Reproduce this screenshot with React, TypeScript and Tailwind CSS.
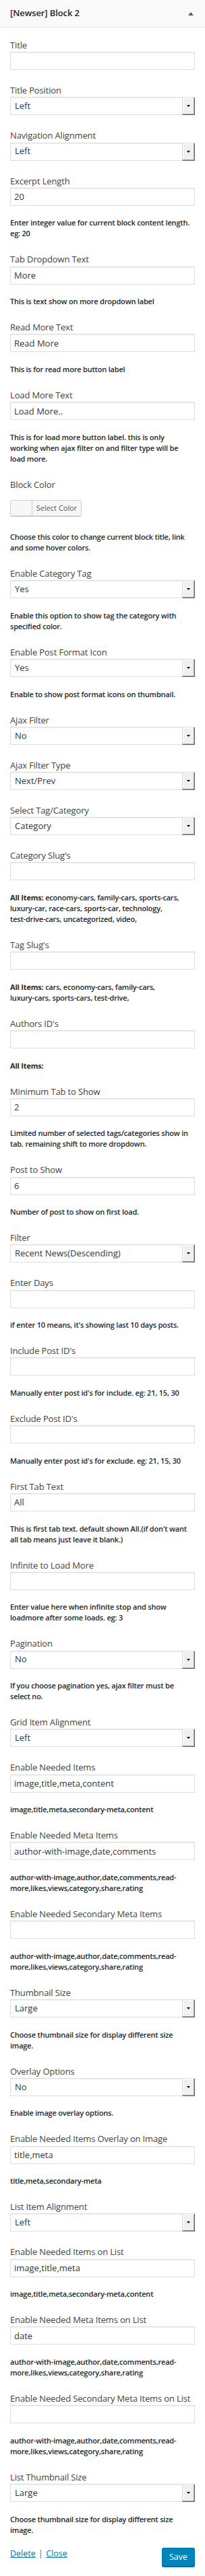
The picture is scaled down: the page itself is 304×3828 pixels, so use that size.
import React from "react";

type Field =
  | { kind: "input"; label: string; value?: string; desc?: string[] }
  | { kind: "select"; label: string; value: string; desc?: string[] }
  | { kind: "color"; label: string; desc: string[] };

const META = ["author-with-image,author,date,comments,read-", "more,likes,views,category,share,rating"];
const THUMB = ["Choose thumbnail size for display different size", "image."];

const FIELDS: Field[] = [
  { kind: "input", label: "Title" },
  { kind: "select", label: "Title Position", value: "Left" },
  { kind: "select", label: "Navigation Alignment", value: "Left" },
  { kind: "input", label: "Excerpt Length", value: "20", desc: ["Enter integer value for current block content length.", "eg: 20"] },
  { kind: "input", label: "Tab Dropdown Text", value: "More", desc: ["This is text show on more dropdown label"] },
  { kind: "input", label: "Read More Text", value: "Read More", desc: ["This is for read more button label"] },
  {
    kind: "input",
    label: "Load More Text",
    value: "Load More..",
    desc: ["This is for load more button label. this is only", "working when ajax filter on and filter type will be", "load more."],
  },
  { kind: "color", label: "Block Color", desc: ["Choose this color to change current block title, link", "and some hover colors."] },
  { kind: "select", label: "Enable Category Tag", value: "Yes", desc: ["Enable this option to show tag the category with", "specified color."] },
  { kind: "select", label: "Enable Post Format Icon", value: "Yes", desc: ["Enable to show post format icons on thumbnail."] },
  { kind: "select", label: "Ajax Filter", value: "No" },
  { kind: "select", label: "Ajax Filter Type", value: "Next/Prev" },
  { kind: "select", label: "Select Tag/Category", value: "Category" },
  {
    kind: "input",
    label: "Category Slug's",
    desc: ["All Items: economy-cars, family-cars, sports-cars,", "luxury-car, race-cars, sports-car, technology,", "test-drive-cars, uncategorized, video,"],
  },
  { kind: "input", label: "Tag Slug's", desc: ["All Items: cars, economy-cars, family-cars,", "luxury-cars, sports-cars, test-drive,"] },
  { kind: "input", label: "Authors ID's", desc: ["All Items:"] },
  { kind: "input", label: "Minimum Tab to Show", value: "2", desc: ["Limited number of selected tags/categories show in", "tab. remaining shift to more dropdown."] },
  { kind: "input", label: "Post to Show", value: "6", desc: ["Number of post to show on first load."] },
  { kind: "select", label: "Filter", value: "Recent News(Descending)" },
  { kind: "input", label: "Enter Days", desc: ["if enter 10 means, it's showing last 10 days posts."] },
  { kind: "input", label: "Include Post ID's", desc: ["Manually enter post id's for include. eg: 21, 15, 30"] },
  { kind: "input", label: "Exclude Post ID's", desc: ["Manually enter post id's for exclude. eg: 21, 15, 30"] },
  { kind: "input", label: "First Tab Text", value: "All", desc: ["This is first tab text. default shown All.(if don't want", "all tab means just leave it blank.)"] },
  { kind: "input", label: "Infinite to Load More", desc: ["Enter value here when infinite stop and show", "loadmore after some loads. eg: 3"] },
  { kind: "select", label: "Pagination", value: "No", desc: ["If you choose pagination yes, ajax filter must be", "select no."] },
  { kind: "select", label: "Grid Item Alignment", value: "Left" },
  { kind: "input", label: "Enable Needed Items", value: "image,title,meta,content", desc: ["image,title,meta,secondary-meta,content"] },
  { kind: "input", label: "Enable Needed Meta Items", value: "author-with-image,date,comments", desc: META },
  { kind: "input", label: "Enable Needed Secondary Meta Items", desc: META },
  { kind: "select", label: "Thumbnail Size", value: "Large", desc: THUMB },
  { kind: "select", label: "Overlay Options", value: "No", desc: ["Enable image overlay options."] },
  { kind: "input", label: "Enable Needed Items Overlay on Image", value: "title,meta", desc: ["title,meta,secondary-meta"] },
  { kind: "select", label: "List Item Alignment", value: "Left" },
  { kind: "input", label: "Enable Needed Items on List", value: "image,title,meta", desc: ["image,title,meta,secondary-meta,content"] },
  { kind: "input", label: "Enable Needed Meta Items on List", value: "date", desc: META },
  { kind: "input", label: "Enable Needed Secondary Meta Items on List", desc: META },
  { kind: "select", label: "List Thumbnail Size", value: "Large", desc: THUMB },
];

function Desc({ lines, className }: { lines: string[]; className: string }) {
  return (
    <div className={className}>
      {lines.map((l, i) => {
        if (l.startsWith("All Items:")) {
          return (
            <div key={i} className="whitespace-nowrap">
              <span className="font-bold">All Items:</span>
              {l.slice("All Items:".length)}
            </div>
          );
        }
        return (
          <div key={i} className="whitespace-nowrap">
            {l}
          </div>
        );
      })}
    </div>
  );
}

function TextInput({ value }: { value?: string }) {
  return (
    <input
      readOnly
      value={value ?? ""}
      className="block h-[27px] w-full border border-[#dddddd] bg-white px-[5px] text-[13px] text-[#32373c] shadow-[inset_0_1px_2px_rgba(0,0,0,0.07)] outline-none"
    />
  );
}

function SelectBox({ value }: { value: string }) {
  return (
    <div className="flex h-[27px] w-full border-l border-t border-[#dddddd] bg-white shadow-[inset_0_1px_2px_rgba(0,0,0,0.07)]">
      <div className="flex flex-1 items-center border-b border-[#dddddd] pl-[6px] text-[13px] text-[#32373c]">{value}</div>
      <div className="flex w-[19px] items-center justify-center border-b border-l border-r border-b-[#696969] border-l-[#d6d6d6] border-r-[#696969] bg-[#f0f0f0] shadow-[inset_-1px_-1px_0_#a0a0a0,inset_1px_1px_0_#ffffff]">
        <svg width="5" height="3" viewBox="0 0 5 3" className="block">
          <path d="M0 0H5L2.5 3Z" fill="#000" />
        </svg>
      </div>
    </div>
  );
}

function ColorPicker() {
  return (
    <div className="mt-[13px] flex h-[24px] w-[106px] overflow-hidden rounded-[3px] border border-[#cccccc] shadow-[0_1px_0_#cccccc]">
      <div className="w-[31px] bg-[#f7f7f7]" />
      <div className="flex flex-1 items-center justify-center border-l border-[#cccccc] bg-[#f7f7f7] text-[11px] text-[#555555]">
        Select Color
      </div>
    </div>
  );
}

export default function App() {
  return (
    <div className="w-full overflow-hidden bg-white text-[#444] [font-family:'Open_Sans',sans-serif]">
      <div className="flex h-[41px] items-center justify-between border-b border-[#e5e5e5] bg-[#fafafa] px-[15px]">
        <div className="text-[13px] font-semibold tracking-[-0.1px] text-[#23282d]">[Newser] Block 2</div>
        <svg width="8" height="5" viewBox="0 0 8 5" className="mr-[2px] block">
          <path d="M0 5L4 0L8 5Z" fill="#555d66" />
        </svg>
      </div>
      <div className="px-[15px] pt-[17px] pb-[8px]">
        {FIELDS.map((f, i) => (
          <div key={i} className="mb-[21px]">
            <div className="text-[13px] leading-[19.2px] tracking-[-0.15px] text-[#444444]">{f.label}</div>
            {f.kind === "input" && <TextInput value={f.value} />}
            {f.kind === "select" && <SelectBox value={f.value} />}
            {f.kind === "color" && <ColorPicker />}
            {f.desc && (
              <Desc
                lines={f.desc}
                className={
                  (f.kind === "color" ? "mt-[23px] " : "mt-[17.6px] ") +
                  "text-[11px] font-semibold leading-[16px] tracking-[-0.2px] text-[#23282d]"
                }
              />
            )}
          </div>
        ))}
        <div className="-mt-[2.4px] flex items-start justify-between">
          <div className="-mt-[1.5px] text-[12.5px] leading-[19px]">
            <a className="text-[#0073aa] underline">Delete</a>
            <span className="mx-[1px] text-[#555d66]"> | </span>
            <a className="text-[#0073aa] underline">Close</a>
          </div>
          <button className="h-[28px] rounded-[3px] border border-[#0073aa] border-b-[#006799] bg-[#0085ba] px-[10px] text-[12.5px] text-white shadow-[0_1px_0_#006799]">
            Save
          </button>
        </div>
      </div>
    </div>
  );
}
